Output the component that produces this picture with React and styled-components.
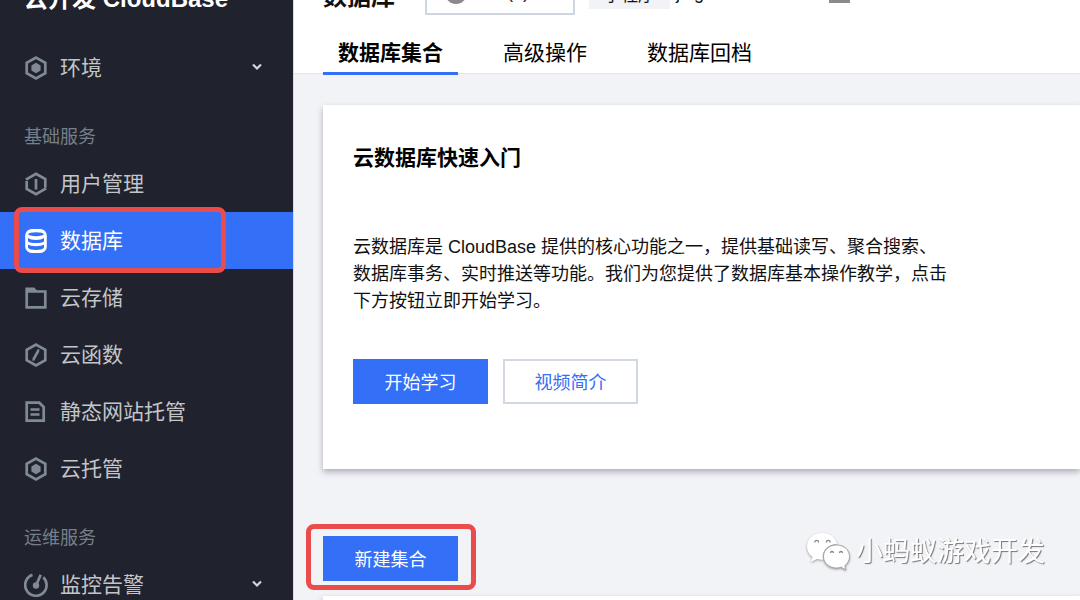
import React from 'react'
import styled, {createGlobalStyle} from 'styled-components'


const GlobalStyle = createGlobalStyle`
  * {
    box-sizing: border-box;
  }
  body {
    margin: 0;
    overflow: hidden;
    font-family: "Liberation Sans", "Noto Sans CJK SC", sans-serif;
    font-size: 18px;
    line-height: 27px;
    color: #111;
  }
`

const Page = styled.div`
  display: flex;
  height: 100vh;
  overflow: hidden;
  background: #f2f3f7;
`

const Sidebar = styled.nav`
  flex: 0 0 293px;
  overflow: hidden;
  background: #20222d;
`

const Brand = styled.div`
  display: flex;
  align-items: flex-end;
  height: 15px;
  margin-bottom: 24px;
  padding-left: 24px;
  overflow: hidden;
  color: #fff;
  font-size: 24px;
  font-weight: bold;
  line-height: 32px;
  white-space: nowrap;
`

const SectionLabel = styled.div`
  height: 59px;
  padding: 22px 24px 0;
  color: #76808a;
  line-height: 39px;
`

const NavLink = styled.a`
  position: relative;
  display: flex;
  align-items: center;
  gap: 12px;
  height: 57px;
  padding: 0 30px 0 24px;
  background: ${props => props.$active ? '#336ff7' : 'transparent'};
  color: ${props => props.$active ? '#fff' : '#c3c5c9'};
  font-size: 21px;
  text-decoration: none;
`

const NavIcon = styled.svg`
  flex: none;
  width: 24px;
  height: 24px;
  color: ${props => props.$active ? '#fff' : '#808a94'};
  fill: none;
  stroke: currentColor;
  stroke-width: 2.7;
`

const Chevron = styled.svg`
  width: 12px;
  height: 12px;
  margin-left: auto;
  fill: none;
  stroke: #d4d6da;
  stroke-width: 2.2;
`

const Marker = styled.span`
  position: absolute;
  inset: ${props => props.$inset};
  border: 5px solid #ea4b4b;
  border-radius: 8px;
  pointer-events: none;
`

const Main = styled.main`
  flex: 1;
  min-width: 0;
  border-left: 1px solid #d9dbe0;
`

const Header = styled.header`
  padding-left: 29px;
  background: #fff;
  border-bottom: 1px solid #e4e6eb;
`

const TitleBar = styled.div`
  display: flex;
  align-items: flex-end;
  height: 15px;
  overflow: hidden;
`

const Title = styled.h1`
  margin: 0 30px 0 0;
  padding-bottom: 2px;
  font-size: 24px;
  line-height: 32px;
`

const EnvButton = styled.button`
  display: flex;
  flex: none;
  align-items: center;
  gap: 30px;
  width: 150px;
  height: 45px;
  padding: 0 18px;
  background: #fff;
  border: 2px solid #cfd5de;
  color: #222;
  font: inherit;
`

const Tag = styled.span`
  margin: 0 6px 6px 14px;
  padding: 0 15px;
  background: #f2f3f7;
  font-size: 17px;
`

const EnvName = styled.span`
  padding-bottom: 8px;
`

const MoreButton = styled.button`
  width: 21px;
  height: 21px;
  margin: 0 0 12px 125px;
  padding: 0;
  background: #8a8a8a;
  border: 0;
`

const Tabs = styled.div`
  display: flex;
  gap: 30px;
  padding-top: 15px;
`

const Tab = styled.button`
  height: 45px;
  margin-bottom: -2px;
  padding: 2px 15px 0;
  background: none;
  border: 0;
  border-bottom: 3px solid ${props => props.$active ? '#336ff7' : 'transparent'};
  color: #000;
  font: inherit;
  font-size: 21px;
  font-weight: ${props => props.$active ? 'bold' : 'normal'};
`

const Content = styled.div`
  padding: 31px 0 0 29px;
`

const Card = styled.section`
  padding: 38px 30px 65px;
  background: #fff;
  box-shadow: 0 3px 6px rgba(40, 44, 60, 0.34);
`

const CardTitle = styled.h2`
  margin: 0 0 61px;
  font-size: 21px;
  line-height: 30px;
  color: #000;
`

const Intro = styled.p`
  max-width: 600px;
  margin: 0 0 44px;
`

const Buttons = styled.div`
  display: flex;
  gap: 15px;
`

const Button = styled.button`
  width: 135px;
  height: 45px;
  padding: 3px 0 0;
  background: ${props => props.$primary ? '#336ff7' : '#fff'};
  border: ${props => props.$primary ? '0' : '2px solid #d2d8e1'};
  color: ${props => props.$primary ? '#fff' : '#336ff7'};
  font: inherit;
`

const CreateAction = styled.div`
  position: relative;
  display: flex;
  width: fit-content;
  margin: 67px 0 15px;
`

const Watermark = styled.div`
  position: fixed;
  right: 35px;
  bottom: 27px;
  display: flex;
  align-items: center;
  gap: 6px;
  color: #fff;
  font-size: 27px;
  line-height: 42px;
  text-shadow: 1px 1px 1px #777;
`

const WechatLogo = styled.svg`
  width: 44px;
  height: 40px;
  filter: drop-shadow(0 1px 1px #999);
`

const Hexagon = () => <path d="M12 1.600 21.300 6.800v10.400L12 22.400 2.700 17.200V6.800z"/>

const icons = {
  env: <>
    <Hexagon/>
    <path d="M12 6.800 16.600 9.400v5.200L12 17.200l-4.600-2.600V9.400z" fill="currentColor" stroke="none"/>
  </>,
  user: <>
    <path d="M1.900 7.700 12 1.800l9.300 5.300v8.600"/>
    <path d="M22.100 16.300 12 22.200l-9.300-5.300V8.900"/>
    <path d="M12 7v10.500"/>
    <path d="M18.500 7.500v7M5.500 16.500v-7" stroke="none"/>
  </>,
  database: <>
    <rect x="1.200" y="0" width="21.600" height="24" rx="6.500" fill="currentColor" stroke="none"/>
    <ellipse cx="12" cy="5.200" rx="7.800" ry="2" fill="#336ff7" stroke="none"/>
    <path d="M4 9c3 2.500 13 2.500 16 0v3.600c-3 2-13 2-16 0zM4 15.600c3 2.300 13 2.300 16 0v3.200c-2 3-14 3-16 0z" fill="#336ff7" stroke="none"/>
  </>,
  folder: <>
    <path d="M2.700 5.500h18.600v15.800H2.700z"/>
    <path d="M1.400 1.400h8.800l3.300 3.500H1.400z" fill="currentColor" stroke="none"/>
  </>,
  func: <>
    <Hexagon/>
    <path d="M15.300 7.500h-1L9.500 16.500h-1"/>
  </>,
  site: <path d="M2.700 2.700h12.600l4.400 4.400v13.600H2.700zM6.500 9.500h9M6.500 14.500h9"/>,
  monitor: <>
    <path d="M8.500 1.900A10.700 10.700 0 1 0 19.300 4.300"/>
    <path d="M12 12.500 16.700 1.800"/>
    <circle cx="12" cy="12.500" r="3.200" fill="currentColor" stroke="none"/>
  </>
}

const basicServices = [
  {icon: 'user', text: '用户管理'},
  {icon: 'database', text: '数据库', active: true},
  {icon: 'folder', text: '云存储'},
  {icon: 'func', text: '云函数'},
  {icon: 'site', text: '静态网站托管'},
  {icon: 'env', text: '云托管'}
]

const NavItem = ({icon, text, active, expandable}) =>
  <NavLink href="#" $active={active} aria-current={active ? 'page' : undefined}>
    <NavIcon viewBox="0 0 24 24" $active={active}>{icons[icon]}</NavIcon>
    {text}
    {expandable && <Chevron viewBox="0 0 12 12"><path d="M2 2.500 6 6.500l4-4"/></Chevron>}
    {active && <Marker $inset="-5px 67px -4px 14px"/>}
  </NavLink>

export default function App() {
  return <>
    <GlobalStyle/>
    <Page>
      <Sidebar>
        <Brand>云开发 CloudBase</Brand>
        <NavItem icon="env" text="环境" expandable/>
        <SectionLabel>基础服务</SectionLabel>
        {basicServices.map(item => <NavItem key={item.text} {...item}/>)}
        <SectionLabel>运维服务</SectionLabel>
        <NavItem icon="monitor" text="监控告警" expandable/>
      </Sidebar>
      <Main>
        <Header>
          <TitleBar>
            <Title>数据库</Title>
            <EnvButton>
              <svg width="22" height="22" viewBox="0 0 22 22">
                <circle cx="11" cy="11" r="11" fill="#8a8a8a"/>
                <path d="M6 14h9l-2 4z" fill="#fff"/>
              </svg>
              1(1)
            </EnvButton>
            <Tag>小程序</Tag>
            <EnvName>jing</EnvName>
            <MoreButton aria-label="更多"/>
          </TitleBar>
          <Tabs>
            <Tab $active>数据库集合</Tab>
            <Tab>高级操作</Tab>
            <Tab>数据库回档</Tab>
          </Tabs>
        </Header>
        <Content>
          <Card>
            <CardTitle>云数据库快速入门</CardTitle>
            <Intro>
              云数据库是 CloudBase 提供的核心功能之一，提供基础读写、聚合搜索、数据库事务、实时推送等功能。我们为您提供了数据库基本操作教学，点击下方按钮立即开始学习。
            </Intro>
            <Buttons>
              <Button $primary>开始学习</Button>
              <Button>视频简介</Button>
            </Buttons>
          </Card>
          <CreateAction>
            <Button $primary>新建集合</Button>
            <Marker $inset="-12px -18px -9px -17px"/>
          </CreateAction>
          <Card/>
        </Content>
      </Main>
    </Page>
    <Watermark>
      <WechatLogo viewBox="0 0 44 40">
        <path d="M16 1C7 1 1 7 1 14.500c0 4.500 2 8 5.500 10.500L5 30l6-3c2 .6 4 .8 6 .7C15 19 22 12 31 12 30 5.500 24 1 16 1z" fill="#fff"/>
        <path d="M30.500 13C23 13 17.500 18 17.500 24.500S23 36 30.500 36c1.500 0 3.300-.3 4.800-.8L40 38l-1.200-4.300c3-2.200 4.700-5.500 4.700-9.200C43.500 18 38 13 30.500 13z" fill="#fff" stroke="#999" strokeWidth=".8"/>
        <g fill="none" stroke="#888" strokeWidth="1.300">
          <path d="M9 10.500a1.800 1.800 0 1 1 3.500 0M20.500 10.500a1.800 1.800 0 1 1 3.500 0M24.500 21a1.500 1.500 0 1 1 3 0M33.500 21a1.500 1.500 0 1 1 3 0"/>
        </g>
      </WechatLogo>
      小蚂蚁游戏开发
    </Watermark>
  </>
}
